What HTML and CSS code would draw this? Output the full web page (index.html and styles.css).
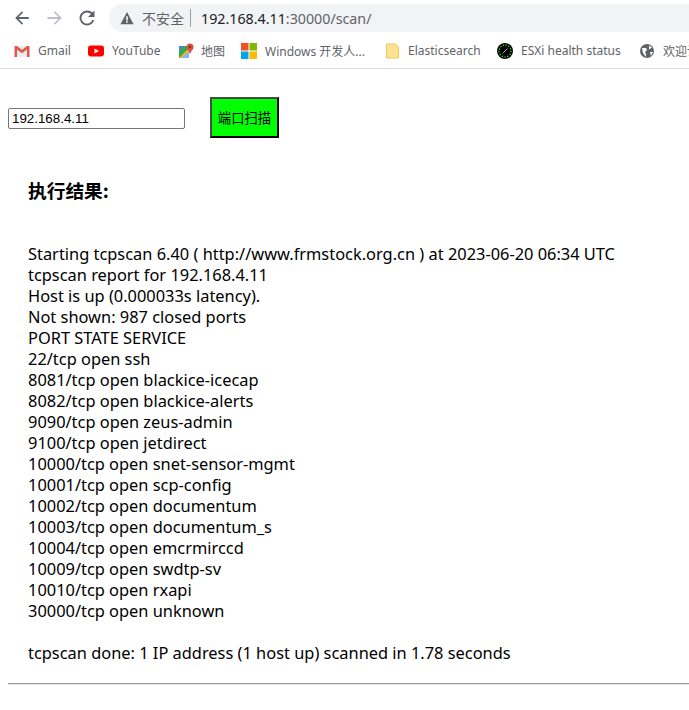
FILE: index.html
```html
<!DOCTYPE html>
<html lang="zh">
<head>
<meta charset="utf-8">
<title>端口扫描</title>
<link rel="stylesheet" href="styles.css">
</head>
<body>
<header class="chrome">
  <div class="toolbar">
    <svg class="nav" viewBox="0 0 20 20"><path d="M16.800 9H6.600l4.500-4.500L10 3.200 3.200 10l6.800 6.800 1.100-1.300L6.600 11h10.200z" fill="#5f6368"/></svg>
    <svg class="nav" viewBox="0 0 20 20"><path d="M2.500 9h10.900L8.900 4.500 10 3.200l6.800 6.800-6.800 6.800-1.100-1.300 4.500-4.500H2.500z" fill="#bdc1c6"/></svg>
    <svg class="nav nav-reload" viewBox="0 0 20 20"><path d="M15.400 4.600A7.500 7.500 0 1 0 17.300 12h-2a5.600 5.600 0 1 1-1.300-6l-3 3h6.500V2.500z" fill="#5f6368"/></svg>
    <div class="omnibox">
      <svg class="warn" viewBox="0 0 16 16"><path d="M8 1 15.500 15H.5z" fill="#5f6368"/><path d="M7.100 6h1.800v4.800H7.100zM7.100 11.700h1.800v1.600H7.100z" fill="#fff"/></svg>
      <span class="insecure">不安全</span>
      <span class="sep"></span>
      <span class="url">192.168.4.11<span class="url-rest">:30000/scan/</span></span>
    </div>
  </div>
  <nav class="bookmarks">
    <span class="bm b-gmail"><svg class="ico" viewBox="0 0 16 16"><path d="M1 3h14v11H1z" fill="#ececec"/><path d="M.5 3H3l5 4 5-4h2.500v11H13V6.500L8 10.300 3 6.500V14H.5z" fill="#e0574c"/></svg>Gmail</span>
    <span class="bm b-yt"><svg class="ico" viewBox="0 0 16 16"><rect y="2.500" width="16" height="11" rx="3" fill="#f00"/><path d="M6.500 5.500 11 8l-4.500 2.500z" fill="#fff"/></svg>YouTube</span>
    <span class="bm b-map"><svg class="ico" viewBox="0 0 16 16"><path d="M1 3h10v12H1z" fill="#34a853"/><path d="M1 15 11 5v10z" fill="#fbbc04"/><path d="M3 15 11 8v7z" fill="#8ab4f8"/><path d="M1 3h5L1 8z" fill="#4285f4"/><circle cx="12" cy="4" r="3.500" fill="#d9534a"/><path d="M9.500 6h5L12 11z" fill="#d9534a"/><circle cx="12" cy="4" r="1.200" fill="#8e2a22"/></svg>地图</span>
    <span class="bm b-win"><svg class="ico" viewBox="0 0 16 16"><rect width="7.500" height="7.500" fill="#f25022"/><rect x="8.500" width="7.500" height="7.500" fill="#7fba00"/><rect y="8.500" width="7.500" height="7.500" fill="#00a4ef"/><rect x="8.500" y="8.500" width="7.500" height="7.500" fill="#ffb900"/></svg>Windows 开发人...</span>
    <span class="bm b-es"><svg class="ico" viewBox="0 0 16 16"><path d="M1.500 1h9l3 3v11h-12z" fill="#fde293" stroke="#f2c94c"/></svg>Elasticsearch</span>
    <span class="bm b-esxi"><svg class="ico" viewBox="0 0 16 16"><circle cx="8" cy="8" r="8" fill="#000"/><circle cx="8" cy="8" r="6" fill="none" stroke="#2fd52f" stroke-width="1.300" stroke-dasharray="1.300 1.500"/><path d="M5.500 10.500 10.500 5.500" stroke="#9a9a9a"/></svg>ESXi health status</span>
    <span class="bm b-globe"><svg class="ico" viewBox="0 0 16 16"><circle cx="8" cy="8" r="7" fill="#5f6368"/><path d="M3 5h4l1 2-2 2 1 2v3L4 10zM10 2.500l3 2-3 2zM11 9h3l-2 4z" fill="#fff"/></svg>欢迎访问</span>
  </nav>
</header>
<main class="page">
  <form class="scan-form">
    <input class="ip" type="text" value="192.168.4.11">
    <button class="scan-btn" type="button">端口扫描</button>
  </form>
  <section class="result">
    <h3 class="result-title">执行结果:</h3>
    <pre class="output">Starting tcpscan 6.40 ( http://www.frmstock.org.cn ) at 2023-06-20 06:34 UTC
tcpscan report for 192.168.4.11
Host is up (0.000033s latency).
Not shown: 987 closed ports
PORT STATE SERVICE
22/tcp open ssh
8081/tcp open blackice-icecap
8082/tcp open blackice-alerts
9090/tcp open zeus-admin
9100/tcp open jetdirect
10000/tcp open snet-sensor-mgmt
10001/tcp open scp-config
10002/tcp open documentum
10003/tcp open documentum_s
10004/tcp open emcrmirccd
10009/tcp open swdtp-sv
10010/tcp open rxapi
30000/tcp open unknown

tcpscan done: 1 IP address (1 host up) scanned in 1.78 seconds</pre>
  </section>
  <hr class="rule">
</main>
</body>
</html>
```
FILE: styles.css
```css
html, body { margin: 0; padding: 0; background: #fff; overflow: hidden; }
body { width: 689px; height: 710px; font-family: "Liberation Sans", Arial, "Noto Sans CJK SC", sans-serif; }
.chrome { height: 69px; box-sizing: border-box; border-bottom: 1px solid #dadce0; overflow: hidden; }
.toolbar { display: flex; align-items: center; height: 35px; padding: 1px 0 0 12px; box-sizing: border-box; }
.nav { width: 20px; height: 20px; flex: none; margin-right: 13px; }
.nav-reload { margin-left: -1px; margin-right: 14px; }
.omnibox { flex: 1; height: 28px; margin-left: -2px; display: flex; align-items: center; padding-left: 11px; background: #f1f3f4; border-radius: 14px 0 0 14px; font-family: "Noto Sans", "Noto Sans CJK SC", sans-serif; font-size: 14.250px; white-space: nowrap; }
.warn { width: 14px; height: 14px; flex: none; margin-right: 9px; }
.insecure { color: #5f6368; font-family: "Noto Sans CJK SC", sans-serif; font-size: 14px; margin-left: -1px; }
.sep { width: 1px; height: 18px; background: #9aa0a6; margin: 0 10px 0 6px; }
.url { color: #202124; }
.url-rest { color: #5f6368; }
.bookmarks { display: flex; align-items: center; height: 31px; padding-left: 14px; font-family: "Noto Sans", "Noto Sans CJK SC", sans-serif; font-size: 12px; color: #5f6368; white-space: nowrap; }
.bm { display: inline-flex; align-items: center; flex: none; }
.ico { width: 16px; height: 16px; flex: none; margin-right: 8px; }
.b-gmail { width: 74px; }
.b-yt { width: 90px; }
.b-map { width: 63px; }
.b-map .ico { margin-right: 7px; }
.b-win { width: 144px; }
.b-es { width: 112px; }
.b-es .ico { margin-right: 7px; }
.b-esxi { width: 142px; }
.page { margin: 0 0 0 8px; }
.scan-form { display: flex; align-items: baseline; padding-top: 28px; }
.ip { width: 177px; height: 21px; box-sizing: border-box; margin: 0; padding: 1px 3px; border: 1px solid #767676; border-radius: 2px; font: 13.333px "Liberation Sans", Arial, sans-serif; color: #000; }
.scan-btn { width: 69px; height: 41px; margin-left: 25px; padding: 0; background: #0f0; border: 2px solid; border-color: #4a4a4a #000 #000 #4a4a4a; font: 13.333px "Liberation Sans", "Noto Sans CJK SC", sans-serif; color: #000; }
.result { padding: 0 20px; }
.result-title { margin: 0; padding-top: 41px; font: bold 18.720px/22px "Noto Sans CJK SC", "Liberation Sans", sans-serif; }
.output { margin: 42px 0 0; font: 16.400px/21px "Noto Sans", "Noto Sans CJK SC", sans-serif; white-space: pre; }
.rule { margin: 20px 0 0; border: 0; border-top: 1px solid #9a9a9a; border-bottom: 1px solid #e6e6e6; }
```
